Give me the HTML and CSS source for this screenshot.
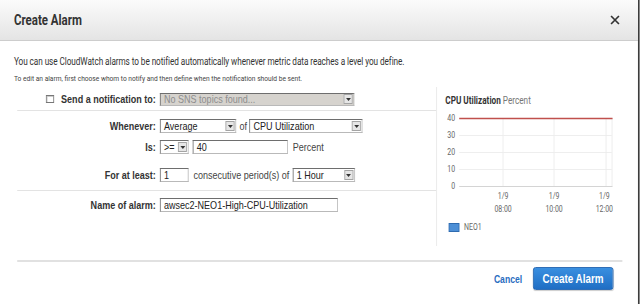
FILE: index.html
```html
<!DOCTYPE html>
<html lang="en">
<head>
  <meta charset="UTF-8">
  <title>Create Alarm</title>
  <link rel="stylesheet" href="styles.css">
</head>
<body>

  <div class="frame">
  <div class="dialog">
    <div class="dialog-header">
      <h1>Create Alarm</h1>
      <span class="close">
        <svg width="12" height="10" viewBox="0 0 10 10" preserveAspectRatio="none"><path d="M1 1 L9 9 M9 1 L1 9" stroke="#333" stroke-width="1.7" fill="none"/></svg>
      </span>
    </div>

    <div class="dialog-body">
      <p class="intro">You can use CloudWatch alarms to be notified automatically whenever metric data reaches a level you define.</p>
      <p class="hint">To edit an alarm, first choose whom to notify and then define when the notification should be sent.</p>

      <div class="main">
        <div class="form">
          <div class="row first">
            <label class="lbl"><span class="check"></span>Send a notification to:</label>
            <div class="select disabled w-sns"><span>No SNS topics found...</span><i class="arrow"></i></div>
          </div>
          <div class="sep"></div>

          <div class="row whenever">
            <label class="lbl">Whenever:</label>
            <div class="select w-stat"><span>Average</span><i class="arrow"></i></div>
            <span class="txt">of</span>
            <div class="select w-metric"><span>CPU Utilization</span><i class="arrow"></i></div>
          </div>

          <div class="row is">
            <label class="lbl">Is:</label>
            <div class="select w-op"><span>&gt;=</span><i class="arrow"></i></div>
            <div class="input w-value">40</div>
            <span class="txt">Percent</span>
          </div>

          <div class="row atleast">
            <label class="lbl">For at least:</label>
            <div class="input w-count">1</div>
            <span class="txt">consecutive period(s) of</span>
            <div class="select w-period"><span>1 Hour</span><i class="arrow"></i></div>
          </div>
          <div class="sep second"></div>

          <div class="row name">
            <label class="lbl">Name of alarm:</label>
            <div class="input w-name">awsec2-NEO1-High-CPU-Utilization</div>
          </div>
        </div>

        <div class="chart">
          <div class="chart-title"><b>CPU Utilization</b> Percent</div>
          <svg class="graph" width="232" height="128" viewBox="0 0 232 128">
            <g class="grid">
              <line x1="27" y1="26.5" x2="213" y2="26.5"/>
              <line x1="27" y1="43.5" x2="213" y2="43.5"/>
              <line x1="27" y1="60.5" x2="213" y2="60.5"/>
              <line x1="80.5" y1="9" x2="80.5" y2="77"/>
              <line x1="142.7" y1="9" x2="142.7" y2="77"/>
              <line x1="206.1" y1="9" x2="206.1" y2="77"/>
              <line x1="213.4" y1="9" x2="213.4" y2="77"/>
            </g>
            <line class="axis" x1="27" y1="77.5" x2="214" y2="77.5"/>
            <line class="limit" x1="27" y1="9.5" x2="214" y2="9.5"/>
            <g class="ylab">
              <text x="22" y="12">40</text>
              <text x="22" y="29">30</text>
              <text x="22" y="46">20</text>
              <text x="22" y="63">10</text>
              <text x="22" y="80">0</text>
            </g>
            <g class="xlab">
              <text x="80.5" y="90">1/9</text>
              <text x="80.5" y="103">08:00</text>
              <text x="142.7" y="90">1/9</text>
              <text x="142.7" y="103">10:00</text>
              <text x="204" y="90">1/9</text>
              <text x="204" y="103">12:00</text>
            </g>
            <rect class="swatch" x="14.6" y="114.5" width="12.2" height="8"/>
            <text class="legend" x="32.9" y="121.5">NEO1</text>
          </svg>
        </div>
      </div>
    </div>

    <div class="dialog-footer">
      <a class="cancel" href="#">Cancel</a>
      <button class="primary">Create Alarm</button>
    </div>
  </div>
  </div>

</body>
</html>
```

FILE: styles.css
```css
/* the screenshot uses narrow faces: the dialog is squeezed to 82% wide to stand in for them */
body {
  margin: 0;
  overflow: hidden;
  background: #fff;
  font-family: "Liberation Sans", Arial, sans-serif;
  color: #333;
}
.frame {
  width: 640px;
  height: 304px;
  overflow: hidden;
}
.dialog {
  width: 778px;
  height: 304px;
  border-right: 2px solid #3c3c3c;
  background: #fff;
  transform: scaleX(0.82);
  transform-origin: 0 0;
}
.dialog-header {
  height: 40px;
  border-bottom: 1px solid #cdcdcd;
  background: linear-gradient(#fbfbfb, #e4e4e4);
  display: flex;
  align-items: center;
  justify-content: space-between;
  padding: 0 22px 0 17px;
}
h1 {
  margin: 0;
  font-family: Roboto, "Liberation Sans", sans-serif;
  font-size: 14px;
  font-weight: bold;
  color: #333;
}
.close { display: flex; }

.dialog-body {
  padding: 14px 0 0 17px;
}
.intro {
  margin: 0;
  font-family: Roboto, "Liberation Sans", sans-serif;
  font-size: 10px;
  letter-spacing: -0.08px;
  line-height: 14px;
  color: #333;
}
.hint {
  margin: 4px 0 0;
  font-family: Roboto, "Liberation Sans", sans-serif;
  font-size: 8.1px;
  line-height: 10px;
  color: #444;
}
.main {
  display: flex;
  height: 159px;
  margin-top: 4px;
}
.form {
  box-sizing: border-box;
  width: 515px;
  padding-left: 4px;
}
.row {
  display: flex;
  align-items: center;
  height: 14px;
  font-size: 11px;
}
.row.first { margin-top: 5px; }
.row.whenever { margin-top: 8px; }
.row.is { margin-top: 7px; }
.row.atleast { margin-top: 14px; }
.row.name { margin-top: 7px; }
.sep {
  margin-top: 4px;
  border-top: 1px solid #e3e3e3;
}
.sep.second { margin-top: 8px; }

.lbl {
  width: 169px;
  margin-right: 5px;
  display: flex;
  justify-content: flex-end;
  align-items: center;
  font-weight: bold;
  color: #333;
}
.check {
  box-sizing: border-box;
  width: 10px;
  height: 8px;
  margin-right: 9px;
  border: 1px solid #777;
  box-shadow: inset 1px 1px 0 #ccc;
  background: #fff;
}
.txt {
  color: #444;
  margin: 0 4px 0 6px;
}

.select, .input {
  box-sizing: border-box;
  height: 14px;
  display: flex;
  align-items: center;
  justify-content: space-between;
  padding-left: 4px;
  border: 1px solid #b9b9b9;
  border-top-color: #6e6e6e;
  border-left-color: #6e6e6e;
  background: #fff;
  color: #222;
  font-size: 11px;
}
.select.disabled {
  background: #d6d3ce;
  color: #8d8d8d;
  height: 13px;
}
.arrow {
  position: relative;
  box-sizing: border-box;
  width: 11px;
  height: 10px;
  margin-right: 1px;
  border: 1px solid #a4a4a4;
  background: #e6e6e6;
}
.arrow::after {
  content: "";
  position: absolute;
  left: 1.5px;
  top: 3px;
  border-top: 3px solid #333;
  border-left: 3px solid transparent;
  border-right: 3px solid transparent;
}
.w-sns { width: 237px; }
.w-stat { width: 93px; }
.w-metric { width: 138px; }
.w-op { width: 35px; margin-right: 5px; }
.w-value { width: 116px; }
.w-count { width: 35px; }
.w-period { width: 76px; }
.w-name { width: 217px; }
.row.whenever .txt { margin: 0 3px 0 4px; }

.chart {
  flex: 1;
  border-left: 1px solid #e6e6e6;
}
.chart-title {
  margin: 7px 0 0 10px;
  font-family: Roboto, "Liberation Sans", sans-serif;
  font-size: 10px;
  line-height: 14px;
  color: #777;
}
.chart-title b { color: #333; }
.graph {
  display: block;
  margin-top: 1px;
  font-family: Roboto, "Liberation Sans", sans-serif;
}
.grid line { stroke: #ececec; stroke-width: 1; }
.axis { stroke: #d0d0d0; stroke-width: 1; }
.limit { stroke: #c0504d; stroke-width: 1.4; }
.ylab text { font-size: 8.5px; fill: #666; text-anchor: end; }
.xlab text { font-size: 8.5px; fill: #666; text-anchor: middle; }
.legend { font-size: 8.5px; fill: #666; }
.swatch { fill: #4d8fd6; stroke: #2e6bb0; stroke-width: 1; }

.dialog-footer {
  margin: 14px 19px 0 21px;
  border-top: 2px solid #e1e1e1;
  padding: 5px 11px 0 0;
  display: flex;
  justify-content: flex-end;
  align-items: center;
}
.cancel {
  font-size: 10.5px;
  font-weight: bold;
  color: #2a6dbf;
  text-decoration: none;
  margin-right: 13px;
}
.primary {
  height: 23px;
  padding: 0 11px;
  border: 1px solid #1b5fae;
  border-radius: 3px;
  background: linear-gradient(#3a8fe0, #1f6ec4);
  color: #fff;
  font-family: inherit;
  font-size: 12px;
  font-weight: bold;
  box-shadow: 0 1px 1px rgba(0,0,0,0.2);
}
```
